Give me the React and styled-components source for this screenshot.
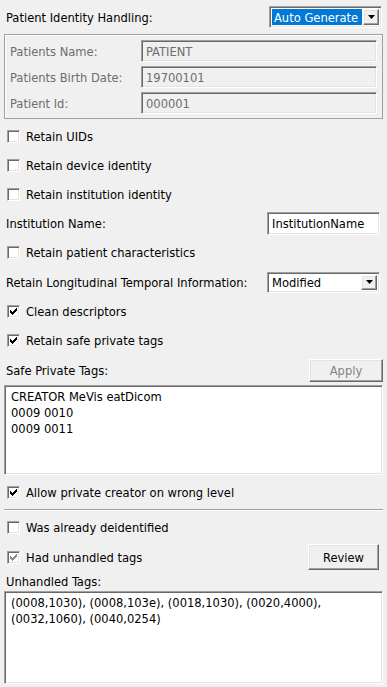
import styled, { createGlobalStyle, css } from "styled-components";

const Global = createGlobalStyle`
  html, body {
    margin: 0;
    padding: 0;
    background: #f0f0f0;
  }
  body {
    font-family: "DejaVu Sans Condensed", "DejaVu Sans", "Liberation Sans", sans-serif;
    font-stretch: condensed;
    font-size: 12.8px;
    color: #000;
  }
`;

const sunken = css`
  box-sizing: border-box;
  border-style: solid;
  border-width: 1px;
  border-color: #a0a0a0 #ffffff #ffffff #a0a0a0;
  box-shadow: inset 1px 1px 0 #696969, inset -1px -1px 0 #e3e3e3;
`;

const raised = css`
  box-sizing: border-box;
  border-style: solid;
  border-width: 1px;
  border-color: #ffffff #696969 #696969 #ffffff;
  box-shadow: inset -1px -1px 0 #a0a0a0, inset 1px 1px 0 #e3e3e3;
  background: #f0f0f0;
`;

const Page = styled.div`
  width: 387px;
  height: 687px;
  padding: 0 4px;
  box-sizing: border-box;
  display: flex;
  flex-direction: column;
  overflow: hidden;
`;

const Row = styled.div`
  display: flex;
  align-items: center;
  justify-content: space-between;
  height: ${(p) => p.h || 29}px;
  margin-top: ${(p) => p.mt || 0}px;
  padding-left: 2px;
  flex-shrink: 0;
`;

const Label = styled.span`
  white-space: nowrap;
  color: ${(p) => (p.disabled ? "#6d6d6d" : "#000")};
`;

const Combo = styled.div`
  ${sunken};
  width: ${(p) => p.w}px;
  height: ${(p) => p.hgt || 22}px;
  background: #fff;
  display: flex;
  align-items: stretch;
  padding: 2px;
  margin-right: ${(p) => p.mr || 0}px;
`;

const ComboText = styled.div`
  flex: 1;
  display: flex;
  align-items: center;
  padding-left: 2px;
  background: ${(p) => (p.selected ? "#0078d7" : "#fff")};
  color: ${(p) => (p.selected ? "#fff" : "#000")};
  margin-right: 1px;
  white-space: nowrap;
`;

const ArrowButton = styled.div`
  ${raised};
  width: 16px;
  display: flex;
  align-items: center;
  justify-content: center;
`;

const Group = styled.div`
  box-sizing: border-box;
  height: 85px;
  margin-top: 6px;
  border: 1px solid #a0a0a0;
  box-shadow: inset 1px 1px 0 #fff;
  padding: 5px 5px 0 5px;
  display: flex;
  flex-direction: column;
  gap: 4px;
  flex-shrink: 0;
`;

const GroupRow = styled.div`
  display: flex;
  align-items: center;
  justify-content: space-between;
`;

const Field = styled.div`
  ${sunken};
  width: ${(p) => p.w}px;
  height: ${(p) => p.hgt || 22}px;
  background: ${(p) => (p.disabled ? "#f0f0f0" : "#fff")};
  color: ${(p) => (p.disabled ? "#6d6d6d" : "#000")};
  display: flex;
  align-items: center;
  padding-left: 4px;
  margin-right: ${(p) => p.mr || 0}px;
  white-space: nowrap;
`;

const CheckWrap = styled.label`
  display: flex;
  align-items: center;
  gap: 6px;
  padding-left: 1px;
`;

const Box = styled.span`
  ${sunken};
  width: 13px;
  height: 13px;
  background: #fff;
  display: flex;
  align-items: center;
  justify-content: center;
`;

const Button = styled.div`
  ${raised};
  width: ${(p) => p.w}px;
  height: ${(p) => p.hgt || 23}px;
  display: flex;
  align-items: center;
  justify-content: center;
  color: ${(p) => (p.disabled ? "#838383" : "#000")};
  margin-right: ${(p) => p.mr || 0}px;
`;

const TextArea = styled.div`
  ${sunken};
  height: ${(p) => p.hgt}px;
  background: #fff;
  padding: 3px 6px;
  line-height: 16px;
  flex-shrink: 0;
`;

const Separator = styled.div`
  height: 1px;
  background: #a0a0a0;
  box-shadow: 0 1px 0 #fff;
  flex-shrink: 0;
`;

function Arrow() {
  return (
    <svg width="7" height="4" viewBox="0 0 7 4">
      <path d="M0 0 H7 L3.5 4 Z" fill="#000" />
    </svg>
  );
}

function CheckBox({ checked, disabled, children }) {
  return (
    <CheckWrap>
      <Box>
        {checked && (
          <svg width="7" height="7" viewBox="0 0 7 7" shapeRendering="crispEdges">
            <path
              d="M6 0h1v3h-1v1h-1v1h-1v1h-1v1h-1v-1h-1v-1h-1v-3h1v1h1v1h1v-1h1v-1h1z"
              fill={disabled ? "#8d8d8d" : "#000"}
            />
          </svg>
        )}
      </Box>
      <Label>{children}</Label>
    </CheckWrap>
  );
}

export default function App() {
  return (
    <>
      <Global />
      <Page>
        <Row h={22} mt={6}>
          <Label>Patient Identity Handling:</Label>
          <Combo w={113} mr={1}>
            <ComboText selected>Auto Generate</ComboText>
            <ArrowButton>
              <Arrow />
            </ArrowButton>
          </Combo>
        </Row>
        <Group>
          <GroupRow>
            <Label disabled>Patients Name:</Label>
            <Field w={236} disabled>PATIENT</Field>
          </GroupRow>
          <GroupRow>
            <Label disabled>Patients Birth Date:</Label>
            <Field w={236} disabled>19700101</Field>
          </GroupRow>
          <GroupRow>
            <Label disabled>Patient Id:</Label>
            <Field w={236} disabled>000001</Field>
          </GroupRow>
        </Group>
        <Row mt={3}>
          <CheckBox>Retain UIDs</CheckBox>
        </Row>
        <Row>
          <CheckBox>Retain device identity</CheckBox>
        </Row>
        <Row>
          <CheckBox>Retain institution identity</CheckBox>
        </Row>
        <Row>
          <Label>Institution Name:</Label>
          <Field w={113} hgt={23} mr={3}>InstitutionName</Field>
        </Row>
        <Row>
          <CheckBox>Retain patient characteristics</CheckBox>
        </Row>
        <Row h={30}>
          <Label>Retain Longitudinal Temporal Information:</Label>
          <Combo w={113} hgt={21} mr={3}>
            <ComboText>Modified</ComboText>
            <ArrowButton>
              <Arrow />
            </ArrowButton>
          </Combo>
        </Row>
        <Row>
          <CheckBox checked>Clean descriptors</CheckBox>
        </Row>
        <Row>
          <CheckBox checked>Retain safe private tags</CheckBox>
        </Row>
        <Row h={30}>
          <Label>Safe Private Tags:</Label>
          <Button w={74} disabled>Apply</Button>
        </Row>
        <TextArea hgt={90}>
          CREATOR MeVis eatDicom
          <br />
          0009 0010
          <br />
          0009 0011
        </TextArea>
        <Row h={34}>
          <CheckBox checked>Allow private creator on wrong level</CheckBox>
        </Row>
        <Separator />
        <Row h={30} mt={2}>
          <CheckBox>Was already deidentified</CheckBox>
        </Row>
        <Row h={30}>
          <CheckBox checked disabled>Had unhandled tags</CheckBox>
          <Button w={71} hgt={26} mr={4}>Review</Button>
        </Row>
        <Row h={19}>
          <Label>Unhandled Tags:</Label>
        </Row>
        <TextArea hgt={93}>
          (0008,1030), (0008,103e), (0018,1030), (0020,4000),
          <br />
          (0032,1060), (0040,0254)
        </TextArea>
      </Page>
    </>
  );
}
